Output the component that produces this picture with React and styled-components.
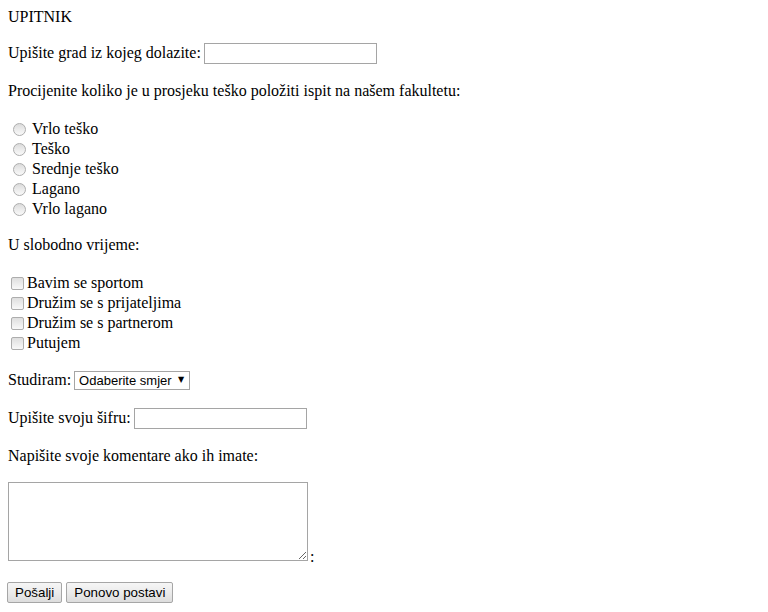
import React from 'react';
import styled, { createGlobalStyle } from 'styled-components';

const GlobalStyle = createGlobalStyle`
  html, body {
    margin: 0;
    padding: 0;
    background: #ffffff;
  }
`;

const Page = styled.form`
  padding: 8px;
  font-family: "Liberation Serif", "Times New Roman", serif;
  font-size: 16px;
  color: #000000;
`;

const Line = styled.div`
  display: flex;
  align-items: center;
  height: ${({ $h }) => $h || 20}px;
  margin-top: ${({ $gap }) => ($gap === undefined ? 16 : $gap)}px;
  white-space: pre;
`;

const OptionList = styled.div`
  display: flex;
  flex-direction: column;
  margin-top: ${({ $gap }) => $gap}px;
`;

const OptionRow = styled.label`
  display: flex;
  align-items: center;
  height: 20px;
`;

const Radio = styled.input.attrs({ type: 'radio' })`
  appearance: none;
  width: 13px;
  height: 13px;
  margin: 1px 6px 0 5px;
  border: 1px solid #adadad;
  border-radius: 50%;
  background: linear-gradient(180deg, #dcdcdc 0%, #ededed 55%, #f9f9f9 100%);
  box-sizing: border-box;
`;

const Checkbox = styled.input.attrs({ type: 'checkbox' })`
  appearance: none;
  width: 13px;
  height: 13px;
  margin: 1px 3px 0 3px;
  border: 1px solid #adadad;
  border-radius: 2px;
  background: linear-gradient(180deg, #dedede 0%, #ededed 55%, #f9f9f9 100%);
  box-sizing: border-box;
`;

const TextField = styled.input`
  width: 173px;
  height: 21px;
  margin-left: 3px;
  box-sizing: border-box;
  border: 1px solid #a5a5a5;
  padding: 1px 2px;
  font-family: "Liberation Sans", Arial, sans-serif;
  font-size: 13px;
  outline: none;
`;

const SelectBox = styled.div`
  position: relative;
  margin-left: 3px;
`;

const Select = styled.select`
  display: block;
  appearance: none;
  width: 116px;
  height: 19px;
  box-sizing: border-box;
  border: 1px solid #a5a5a5;
  border-radius: 0;
  background: #ffffff;
  padding: 0 0 0 4px;
  font-family: "Liberation Sans", Arial, sans-serif;
  font-size: 13px;
  color: #000000;
  outline: none;
`;

const Arrow = styled.span`
  position: absolute;
  right: 6px;
  top: 3px;
  font-family: "DejaVu Sans", sans-serif;
  font-size: 8px;
  line-height: 12px;
  pointer-events: none;
`;

const CommentRow = styled.div`
  display: flex;
  align-items: flex-end;
  margin-top: 16px;
`;

const TextArea = styled.textarea`
  width: 300px;
  height: 79px;
  margin: 0;
  box-sizing: border-box;
  border: 1px solid #a5a5a5;
  font-family: "Liberation Mono", monospace;
  font-size: 13px;
  outline: none;
`;

const Colon = styled.span`
  line-height: 14px;
  margin-left: 2px;
  margin-bottom: -3px;
`;

const ButtonRow = styled.div`
  display: flex;
  gap: 4px;
  margin-top: 21px;
  margin-left: -1px;
`;

const Button = styled.button`
  height: 21px;
  padding: 0 7px;
  border: 1px solid #a6a6a6;
  border-radius: 2px;
  background: linear-gradient(180deg, #f6f6f6 0%, #ebebeb 50%, #dddddd 100%);
  font-family: "Liberation Sans", Arial, sans-serif;
  font-size: 13.33px;
  color: #000000;
`;

const difficulty = ['Vrlo teško', 'Teško', 'Srednje teško', 'Lagano', 'Vrlo lagano'];
const freeTime = ['Bavim se sportom', 'Družim se s prijateljima', 'Družim se s partnerom', 'Putujem'];

export default function App() {
  return (
    <>
      <GlobalStyle />
      <Page onSubmit={(e) => e.preventDefault()}>
        <Line $gap={0} $h={18}>UPITNIK</Line>
        <Line $gap={16} $h={22}>
          Upišite grad iz kojeg dolazite:<TextField type="text" />
        </Line>
        <Line $gap={17}>Procijenite koliko je u prosjeku teško položiti ispit na našem fakultetu:</Line>
        <OptionList $gap={18}>
          {difficulty.map((item) => (
            <OptionRow key={item}>
              <Radio name="tezina" />
              {item}
            </OptionRow>
          ))}
        </OptionList>
        <Line $gap={16}>U slobodno vrijeme:</Line>
        <OptionList $gap={18}>
          {freeTime.map((item) => (
            <OptionRow key={item}>
              <Checkbox />
              {item}
            </OptionRow>
          ))}
        </OptionList>
        <Line $gap={17}>
          Studiram:
          <SelectBox>
            <Select defaultValue="">
              <option value="">Odaberite smjer</option>
            </Select>
            <Arrow>▼</Arrow>
          </SelectBox>
        </Line>
        <Line $gap={17} $h={22}>
          Upišite svoju šifru:<TextField type="password" />
        </Line>
        <Line $gap={17}>Napišite svoje komentare ako ih imate:</Line>
        <CommentRow>
          <TextArea />
          <Colon>:</Colon>
        </CommentRow>
        <ButtonRow>
          <Button type="submit">Pošalji</Button>
          <Button type="reset">Ponovo postavi</Button>
        </ButtonRow>
      </Page>
    </>
  );
}
